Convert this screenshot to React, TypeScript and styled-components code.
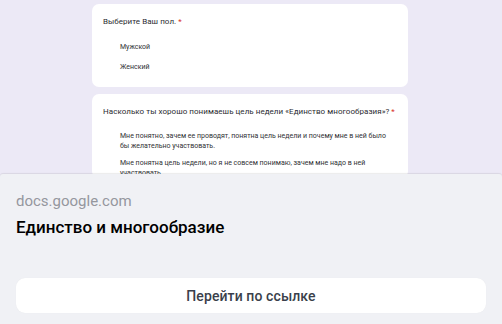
import React from "react";
import styled, { createGlobalStyle } from "styled-components";

const Global = createGlobalStyle`
  html, body { margin: 0; padding: 0; }
  body { width: 502px; height: 324px; overflow: hidden; font-family: Roboto, "Liberation Sans", Arial, sans-serif; }
`;

const Screen = styled.div`
  width: 502px;
  height: 324px;
  display: flex;
  flex-direction: column;
  background: #ece9f6;
`;

const Preview = styled.div`
  height: 174px;
  overflow: hidden;
  display: flex;
  flex-direction: column;
  gap: 7px;
  padding: 4px 0 0 92px;
  box-sizing: border-box;
`;

const Card = styled.div<{ $h?: number }>`
  width: 316px;
  background: #ffffff;
  border-radius: 7px;
  box-sizing: border-box;
  padding: 13px 12px 0 11px;
  flex-shrink: 0;
  ${(p) => (p.$h ? `height: ${p.$h}px;` : "")}
`;

const Question = styled.div`
  font-size: 8px;
  line-height: 10px;
  color: #2b2c30;
  letter-spacing: 0.05px;
`;

const Star = styled.span`
  color: #d93025;
`;

const Options = styled.div<{ $top: number; $gap: number }>`
  display: flex;
  flex-direction: column;
  gap: ${(p) => p.$gap}px;
  padding: ${(p) => p.$top}px 0 0 17px;
`;

const Option = styled.div`
  font-size: 7px;
  line-height: 9.5px;
  color: #303134;
`;

const Sheet = styled.div`
  flex: 1;
  background: #f0f1f5;
  border-top-left-radius: 3px;
  border-top-right-radius: 3px;
  box-shadow: 0 -1px 1px rgba(0, 0, 0, 0.08);
  display: flex;
  flex-direction: column;
  padding: 0 16px;
  box-sizing: border-box;
`;

const Domain = styled.div`
  font-size: 15px;
  line-height: 18px;
  color: #95979e;
  margin-top: 18px;
`;

const Title = styled.div`
  font-size: 17px;
  line-height: 20px;
  font-weight: 500;
  color: #000000;
  margin-top: 7px;
`;

const Button = styled.button`
  margin-top: auto;
  margin-bottom: 11px;
  height: 35px;
  width: 100%;
  border: none;
  border-radius: 9px;
  background: #ffffff;
  box-shadow: 0 0 1px rgba(0, 0, 0, 0.06);
  font-family: Roboto, "Liberation Sans", Arial, sans-serif;
  font-size: 14px;
  font-weight: 500;
  color: #3a3f4b;
  letter-spacing: 0.1px;
  display: flex;
  align-items: center;
  justify-content: center;
`;

export default function App() {
  return (
    <Screen>
      <Global />
      <Preview>
        <Card $h={83}>
          <Question>
            Выберите Ваш пол. <Star>*</Star>
          </Question>
          <Options $top={16} $gap={10}>
            <Option>Мужской</Option>
            <Option>Женский</Option>
          </Options>
        </Card>
        <Card>
          <Question>
            Насколько ты хорошо понимаешь цель недели «Единство многообразия»? <Star>*</Star>
          </Question>
          <Options $top={15} $gap={8}>
            <Option>
              Мне понятно, зачем ее проводят, понятна цель недели и почему мне в ней было бы желательно участвовать.
            </Option>
            <Option>
              Мне понятна цель недели, но я не совсем понимаю, зачем мне надо в ней участвовать.
            </Option>
          </Options>
        </Card>
      </Preview>
      <Sheet>
        <Domain>docs.google.com</Domain>
        <Title>Единство и многообразие</Title>
        <Button>Перейти по ссылке</Button>
      </Sheet>
    </Screen>
  );
}
